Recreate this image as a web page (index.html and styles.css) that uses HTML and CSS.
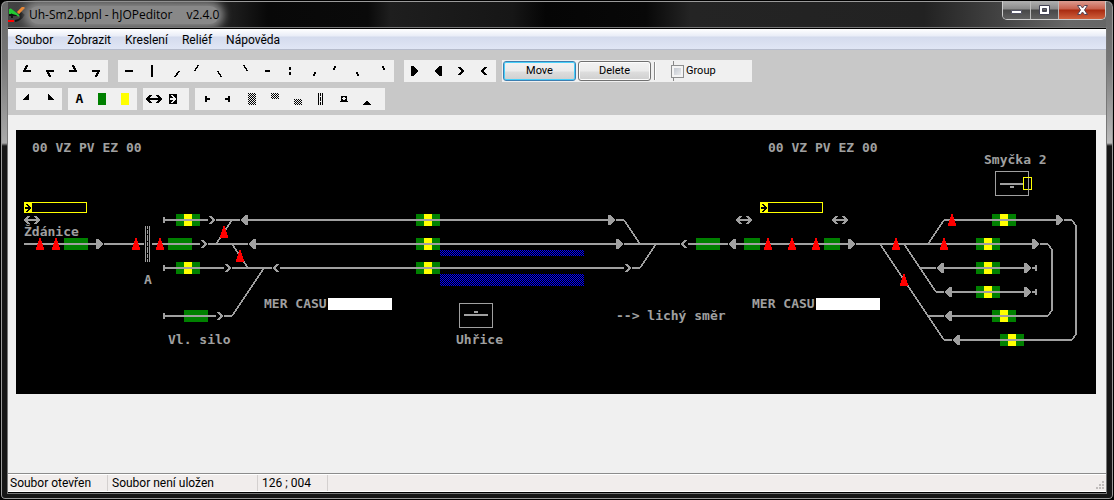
FILE: index.html
```html
<!DOCTYPE html>
<html lang="cs">
<head>
<meta charset="utf-8">
<title>Uh-Sm2.bpnl - hJOPeditor v2.4.0</title>
<link rel="stylesheet" href="styles.css">
</head>
<body>
<svg class="defs" width="0" height="0" aria-hidden="true">
  <defs>
    <pattern id="checker" width="2" height="2" patternUnits="userSpaceOnUse">
      <path d="M0 0h1v1h-1zM1 1h1v1h-1z" fill="#000"/>
    </pattern>
    <pattern id="checker-blue" width="2" height="2" patternUnits="userSpaceOnUse">
      <path d="M0 0h1v1h-1zM1 1h1v1h-1z" fill="#0000ff"/>
    </pattern>
    <!-- Every symbol sits in an 8 x 12 cell -->
    <path id="tri-r" d="M0 1h3v1h1v1h1v1h1v1h1v2h-1v1h-1v1h-1v1h-1v1h-3z"/>
    <path id="tri-l" d="M8 1h-3v1h-1v1h-1v1h-1v1h-1v2h1v1h1v1h1v1h1v1h3z"/>
    <path id="chev-r" d="M1 2h3v1h1v1h1v1h1v2h-1v1h-1v1h-1v1h-3v-1h1v-1h1v-1h1v-2h-1v-1h-1v-1h-1z"/>
    <path id="chev-l" d="M7 2h-3v1h-1v1h-1v1h-1v2h1v1h1v1h1v1h3v-1h-1v-1h-1v-1h-1v-2h1v-1h1v-1h1z"/>
    <path id="signal" d="M-1 0h2v3h1v3h1v3h1v3h-8v-3h1v-3h1v-3h1z"/>
    <path id="bidir" d="M0 5h1v-1h1v-1h1v-1h3v1h-1v1h-1v1h8v-1h-1v-1h-1v-1h3v1h1v1h1v1h1v2h-1v1h-1v1h-1v1h-3v-1h1v-1h1v-1h-8v1h1v1h1v1h-3v-1h-1v-1h-1v-1h-1z"/>
    <path id="arrow" d="M1 5h3v-1h-1v-1h-1v-1h2v1h1v1h1v1h1v2h-1v1h-1v1h-1v1h-2v-1h1v-1h1v-1h-3z"/>
    <path id="buffer-l" d="M3 3h2v2h3v2h-3v2h-2z"/>
    <path id="buffer-r" d="M5 3h-2v2h-3v2h3v2h2z"/>
    <path id="crossing" d="M1 0h1v12h-1zM5 0h1v12h-1zM3 0h1v3h-1zM3 4h1v4h-1zM3 9h1v3h-1z"/>
    <g id="block3"><path class="green" d="M0 0h24v12h-24z"/></g>
    <g id="block3y"><path class="green" d="M0 0h24v12h-24z"/><path class="yellow" d="M8 0h8v12h-8z"/></g>
    <g id="direction">
      <path class="yellow" d="M0 0h8v11h-8z"/>
      <path d="M.5 .5h62v10h-62z" fill="none" stroke="#ff0"/>
      <use href="#arrow" fill="#000"/>
    </g>
  </defs>
</svg>

<div class="window">
  <header class="titlebar">
    <svg class="app-icon" width="17" height="17" viewBox="0 0 17 17" aria-hidden="true">
      <path d="M1 8h12M4 5v6" stroke="#111" stroke-width="2" fill="none"/>
      <path d="M12 4l5 4-5 4z" fill="#111"/>
      <path d="M2 2l9 7M2 2v5M2 5l6 2" stroke="#2c3" stroke-width="2" fill="none"/>
      <path d="M10 6l6-6" stroke="#f82" stroke-width="3" fill="none"/>
      <path d="M7 14q5-1 8-5" stroke="#111" stroke-width="2" fill="none"/>
      <path d="M0 14h6" stroke="#f00" stroke-width="2"/>
    </svg>
    <h1 class="title"><span>Uh-Sm2.bpnl - hJOPeditor</span><span>v2.4.0</span></h1>
    <div class="caption-buttons">
      <button class="caption" type="button" aria-label="Minimalizovat">
        <svg width="13" height="10" viewBox="0 0 13 10"><path d="M1.500 5.500h10v3h-10z" fill="#fff" stroke="#556"/></svg>
      </button>
      <button class="caption" type="button" aria-label="Maximalizovat">
        <svg width="13" height="10" viewBox="0 0 13 10"><path d="M1.500 .5h10v9h-10zM4.500 3.500v3h4v-3z" fill="#fff" fill-rule="evenodd" stroke="#445"/></svg>
      </button>
      <button class="caption close" type="button" aria-label="Zavřít">
        <svg width="13" height="10" viewBox="0 0 13 10"><path d="M1.500 .5h3l2 2.500 2-2.500h3l-3 4.500 3 4.500h-3l-2-2.500-2 2.500h-3l3-4.500z" fill="#fff" stroke="#545"/></svg>
      </button>
    </div>
  </header>

  <main class="client">
    <nav class="menu">
      <button type="button">Soubor</button>
      <button type="button">Zobrazit</button>
      <button type="button">Kreslení</button>
      <button type="button">Reliéf</button>
      <button type="button">Nápověda</button>
    </nav>

    <div class="toolbars">
      <div class="tool-row">
        <div class="group wide-gap">
          <button class="tool" type="button" aria-label="Oblouk 1"><svg viewBox="-7 -5 23 22"><path class="ln" d="M4.500 0L1 6h7"/></svg></button>
          <button class="tool" type="button" aria-label="Oblouk 2"><svg viewBox="-7 -5 23 22"><path class="ln" d="M8 6H1l3.500 6"/></svg></button>
          <button class="tool" type="button" aria-label="Oblouk 3"><svg viewBox="-7 -5 23 22"><path class="ln" d="M3.500 0L7 6H0"/></svg></button>
          <button class="tool" type="button" aria-label="Oblouk 4"><svg viewBox="-7 -5 23 22"><path class="ln" d="M0 6h7l-3.500 6"/></svg></button>
        </div>
        <div class="group wide-gap">
          <button class="tool" type="button" aria-label="Vodorovná"><svg viewBox="-7 -5 23 22"><path class="ln" d="M0 6h8"/></svg></button>
          <button class="tool" type="button" aria-label="Svislá"><svg viewBox="-7 -5 23 22"><path class="ln" d="M4 0v12"/></svg></button>
          <button class="tool" type="button" aria-label="Šikmá 1"><svg viewBox="-7 -5 23 22"><path class="ln thin" d="M8 6l-4 6"/></svg></button>
          <button class="tool" type="button" aria-label="Šikmá 2"><svg viewBox="-7 -5 23 22"><path class="ln thin" d="M4.500 0l-4 6"/></svg></button>
          <button class="tool" type="button" aria-label="Šikmá 3"><svg viewBox="-7 -5 23 22"><path class="ln thin" d="M.5 6l4 6"/></svg></button>
          <button class="tool" type="button" aria-label="Šikmá 4"><svg viewBox="-7 -5 23 22"><path class="ln thin" d="M3.500 0l4 6"/></svg></button>
          <button class="tool" type="button" aria-label="Krátká vodorovná"><svg viewBox="-7 -5 23 22"><path class="ln" d="M2 6h5"/></svg></button>
          <button class="tool" type="button" aria-label="Krátká svislá"><svg viewBox="-7 -5 23 22"><path class="ln" d="M4 2v3M4 7v3"/></svg></button>
          <button class="tool" type="button" aria-label="Krátká šikmá 1"><svg viewBox="-7 -5 23 22"><path d="M5 7h2v2h-1v2h-2v-2h1z"/></svg></button>
          <button class="tool" type="button" aria-label="Krátká šikmá 2"><svg viewBox="-7 -5 23 22"><path d="M2 1h2v2h-1v2h-2v-2h1z"/></svg></button>
          <button class="tool" type="button" aria-label="Krátká šikmá 3"><svg viewBox="-7 -5 23 22"><path d="M1 7h2v2h1v2h-2v-2h-1z"/></svg></button>
          <button class="tool" type="button" aria-label="Krátká šikmá 4"><svg viewBox="-7 -5 23 22"><path d="M4 1h2v2h1v2h-2v-2h-1z"/></svg></button>
        </div>
        <div class="group">
          <button class="tool" type="button" aria-label="Návěstidlo vpravo"><svg viewBox="-7 -5 23 22"><use href="#tri-r"/></svg></button>
          <button class="tool" type="button" aria-label="Návěstidlo vlevo"><svg viewBox="-7 -5 23 22"><use href="#tri-l"/></svg></button>
          <button class="tool" type="button" aria-label="Seřaďovací vpravo"><svg viewBox="-7 -5 23 22"><use href="#chev-r"/></svg></button>
          <button class="tool" type="button" aria-label="Seřaďovací vlevo"><svg viewBox="-7 -5 23 22"><use href="#chev-l"/></svg></button>
        </div>
        <div class="group actions">
          <button class="push focused" type="button">Move</button>
          <button class="push" type="button">Delete</button>
          <span class="divider"></span>
          <label class="check"><input type="checkbox">Group</label>
        </div>
      </div>
      <div class="tool-row">
        <div class="group">
          <button class="tool" type="button" aria-label="Výkolejka 1"><svg viewBox="-7 -5 23 22"><path d="M6 7h-6v-1h1v-1h1v-1h1v-1h1v-1h1v-1h1z"/></svg></button>
          <button class="tool" type="button" aria-label="Výkolejka 2"><svg viewBox="-7 -5 23 22"><path d="M2 7h6v-1h-1v-1h-1v-1h-1v-1h-1v-1h-1v-1h-1z"/></svg></button>
        </div>
        <div class="group">
          <button class="tool letter" type="button">A</button>
          <button class="tool" type="button" aria-label="Zelený blok"><svg viewBox="-7 -5 23 22"><path class="green" d="M0 0h8v12h-8z"/></svg></button>
          <button class="tool" type="button" aria-label="Žlutý blok"><svg viewBox="-7 -5 23 22"><path class="yellow" d="M0 0h8v12h-8z"/></svg></button>
        </div>
        <div class="group">
          <button class="tool" type="button" aria-label="Úvazka"><svg viewBox="-3 -5 23 22"><use href="#bidir"/></svg></button>
          <button class="tool" type="button" aria-label="Úvazka soupravy"><svg viewBox="-3 -5 23 22"><path d="M0 1h8v10h-8z"/><use href="#arrow" fill="#f0f0f0"/></svg></button>
        </div>
        <div class="group padded">
          <button class="tool" type="button" aria-label="Zarážedlo vlevo"><svg viewBox="-7 -5 23 22"><use href="#buffer-l"/></svg></button>
          <button class="tool" type="button" aria-label="Zarážedlo vpravo"><svg viewBox="-7 -5 23 22"><use href="#buffer-r"/></svg></button>
          <button class="tool" type="button" aria-label="Nástupiště"><svg viewBox="-7 -5 23 22"><path fill="url(#checker)" d="M0 0h8v12h-8z"/></svg></button>
          <button class="tool" type="button" aria-label="Nástupiště nahoře"><svg viewBox="-7 -5 23 22"><path fill="url(#checker)" d="M0 0h8v6h-8z"/></svg></button>
          <button class="tool" type="button" aria-label="Nástupiště dole"><svg viewBox="-7 -5 23 22"><path fill="url(#checker)" d="M0 6h8v6h-8z"/></svg></button>
          <button class="tool" type="button" aria-label="Přejezd"><svg viewBox="-7 -5 23 22"><use href="#crossing"/></svg></button>
          <button class="tool" type="button" aria-label="Zámek"><svg viewBox="-7 -5 23 22"><path fill-rule="evenodd" d="M1 3h6v5h1v1h-8v-1h1zM3 4v1h-1v1h1v1h2v-1h1v-1h-1v-1z"/></svg></button>
          <button class="tool" type="button" aria-label="Rozpojovač"><svg viewBox="-7 -5 23 22"><path d="M3 8h2v1h1v1h1v1h1v1h-8v-1h1v-1h1v-1h1z"/></svg></button>
        </div>
      </div>
    </div>

    <div class="workspace">
      <svg class="relief" width="1080" height="264" viewBox="0 0 1080 264" role="img" aria-label="Reliéf kolejiště">
        <!-- platforms -->
        <path fill="url(#checker-blue)" d="M424 120h144v6h-144zM424 144h144v12h-144z"/>

        <!-- occupancy blocks -->
        <use href="#block3y" x="160" y="84"/><use href="#block3y" x="400" y="84"/><use href="#block3y" x="976" y="84"/>
        <use href="#block3" x="48" y="108"/><use href="#block3" x="152" y="108"/><use href="#block3y" x="400" y="108"/>
        <use href="#block3" x="680" y="108"/><path class="green" d="M728 108h16v12h-16zM808 108h16v12h-16z"/><use href="#block3y" x="960" y="108"/>
        <use href="#block3y" x="160" y="132"/><use href="#block3y" x="400" y="132"/><use href="#block3y" x="960" y="132"/>
        <use href="#block3y" x="960" y="156"/>
        <use href="#block3" x="168" y="180"/><use href="#block3y" x="976" y="180"/>
        <use href="#block3y" x="984" y="204"/>

        <!-- straight tracks -->
        <path class="track" d="M148 90H192M200 90H224M232 90H592M600 90H608M928 90H1040M1048 90H1056
          M8 114H80M88 114H128M136 114H184M192 114H232M240 114H600M608 114H664M672 114H712M720 114H832M840 114H1016M1024 114H1032
          M148 138H208M216 138H256M264 138H608M616 138H624M904 138H920M928 138H1008
          M920 162H928M936 162H1008
          M148 186H200M208 186H216M912 186H928M936 186H1032
          M928 210H936M944 210H1056"/>
        <!-- diagonals and loops -->
        <path class="diag" d="M216 90L200 114M216 114L232 138M216 186L248 138M608 90L624 114M624 138L640 114
          M928 90L912 114M864 114L928 210M888 114L920 162
          M1056 90L1060 96V204L1056 210M1032 114L1036 120V180L1032 186"/>

        <g class="mark">
          <use href="#buffer-l" x="144" y="84"/><use href="#buffer-l" x="144" y="132"/><use href="#buffer-l" x="144" y="180"/>
          <use href="#buffer-r" x="1016" y="132"/><use href="#buffer-r" x="1016" y="156"/>
          <use href="#chev-r" x="192" y="84"/><use href="#tri-l" x="224" y="84"/><use href="#tri-r" x="592" y="84"/><use href="#tri-r" x="1040" y="84"/>
          <use href="#tri-r" x="80" y="108"/><use href="#chev-r" x="184" y="108"/><use href="#tri-l" x="232" y="108"/><use href="#tri-r" x="600" y="108"/>
          <use href="#chev-l" x="664" y="108"/><use href="#tri-l" x="712" y="108"/><use href="#tri-r" x="832" y="108"/><use href="#tri-r" x="1016" y="108"/>
          <use href="#chev-r" x="208" y="132"/><use href="#chev-l" x="256" y="132"/><use href="#chev-r" x="608" y="132"/>
          <use href="#tri-l" x="920" y="132"/><use href="#tri-r" x="1008" y="132"/>
          <use href="#tri-l" x="928" y="156"/><use href="#tri-r" x="1008" y="156"/>
          <use href="#chev-r" x="200" y="180"/><use href="#tri-l" x="928" y="180"/><use href="#tri-l" x="936" y="204"/>
          <use href="#bidir" x="8" y="84"/><use href="#bidir" x="720" y="84"/><use href="#bidir" x="816" y="84"/>
          <use href="#crossing" x="128" y="96"/><use href="#crossing" x="128" y="108"/><use href="#crossing" x="128" y="120"/>
        </g>

        <g class="red">
          <use href="#signal" x="936" y="84"/><use href="#signal" x="208" y="96"/>
          <use href="#signal" x="24" y="108"/><use href="#signal" x="40" y="108"/><use href="#signal" x="120" y="108"/><use href="#signal" x="144" y="108"/>
          <use href="#signal" x="752" y="108"/><use href="#signal" x="776" y="108"/><use href="#signal" x="800" y="108"/>
          <use href="#signal" x="880" y="108"/><use href="#signal" x="928" y="108"/>
          <use href="#signal" x="224" y="120"/><use href="#signal" x="888" y="144"/>
        </g>

        <g transform="translate(8 72)"><use href="#direction"/></g>
        <g transform="translate(744 72)"><use href="#direction"/></g>

        <!-- station buildings -->
        <path class="outline" d="M443.500 173.500h33v24h-33zM979.500 41.500h33v24h-33z"/>
        <path class="mark" d="M448 184h24v2h-24zM458 181h4v2h-4zM984 53h24v2h-24zM994 56h4v2h-4z"/>

        <path fill="#fff" d="M312 168h64v12h-64zM800 168h64v12h-64z"/>
        <path fill="#000" stroke="#ff0" d="M1007.500 47.500h8v12h-8z"/>
        <path class="mark" d="M1012 48h1v12h-1z"/>

        <g class="labels">
          <text x="16" y="22">00 VZ PV EZ 00</text>
          <text x="752" y="22">00 VZ PV EZ 00</text>
          <text x="968" y="34">Smyčka 2</text>
          <text x="8" y="106">Ždánice</text>
          <text x="128" y="154">A</text>
          <text x="248" y="178">MER CASU</text>
          <text x="736" y="178">MER CASU</text>
          <text x="600" y="190">--&gt; lichý směr</text>
          <text x="152" y="214">Vl. silo</text>
          <text x="440" y="214">Uhřice</text>
        </g>
      </svg>
    </div>

    <footer class="status">
      <span class="pane state">Soubor otevřen</span>
      <span class="pane saved">Soubor není uložen</span>
      <span class="pane coords">126 ; 004</span>
      <svg class="grip" width="10" height="10" viewBox="0 0 10 10" aria-hidden="true">
        <path d="M7 0h2v2h-2zM4 3h2v2h-2zM7 3h2v2h-2zM1 6h2v2h-2zM4 6h2v2h-2zM7 6h2v2h-2z" fill="#c0bcbb"/>
      </svg>
    </footer>
  </main>
</div>
</body>
</html>
```

FILE: styles.css
```css
* { box-sizing: border-box; }

body {
  margin: 0;
  background: #000;
  font: 12px/16px Roboto, "Noto Sans", sans-serif;
  color: #000;
}

button { font: inherit; color: inherit; }

.defs { position: absolute; }

.window {
  display: flex;
  flex-direction: column;
  min-height: 100vh;
  padding: 0 7px 6px;
  border: 1px solid #000;
  border-radius: 7px 7px 5px 5px;
  box-shadow: inset 0 0 0 1px #9a9a9a;
  background:
    linear-gradient(#666, #777 60px, #aaa 142px, #161616 145px, #161616) left / 7px 100% no-repeat,
    linear-gradient(#666, #777 60px, #bbb 142px, #161616 145px, #161616) right / 7px 100% no-repeat,
    linear-gradient(90deg, #444 0, #1c1c1c 21%, #080808 24%, #0a0a0a 33%, #1e1e1e 35%, #161616 46%, #050505 49%, #080808 58%, #242424 62%, #222 83%, #444 90%, #686868 96%, #666) top / 100% 29px no-repeat,
    #161616;
}

.titlebar {
  display: flex;
  align-items: flex-start;
  height: 27px;
}

.app-icon { margin-top: 6px; }

.title {
  display: flex;
  gap: 14px;
  margin: 5px 0 0 4px;
  font: 400 12px/18px "Open Sans", "Noto Sans", sans-serif;
  background: #888;
  border-radius: 9px;
  box-shadow: 0 0 8px 5px #888;
}

.caption-buttons {
  display: flex;
  margin-left: auto;
  border: 1px solid #ccc;
  border-top: 0;
  border-radius: 0 0 5px 5px;
  overflow: hidden;
}

.caption {
  display: flex;
  align-items: center;
  justify-content: center;
  width: 28px;
  height: 18px;
  padding: 0;
  border: 0;
  border-right: 1px solid #bbb;
  background: linear-gradient(#b0b0b0, #8a8a8a 8px, #484848 9px, #606060);
}

.caption.close {
  width: 46px;
  border-right: 0;
  background: linear-gradient(#dc9c90, #c8604c 8px, #a82a10 9px, #d0603c);
}

.client {
  display: flex;
  flex: 1;
  flex-direction: column;
  min-width: 0;
  border: 1px solid #000;
  border-width: 1px 0;
  outline: 1px solid #777;
  background: #f0f0f0;
}

.menu {
  display: flex;
  height: 21px;
  border-bottom: 1px solid #b6bccc;
  background: linear-gradient(#fff, #e9edf7 7px, #d4dbed 8px, #e0e6f5);
}

.menu button {
  padding: 2px 7px 0;
  border: 0;
  background: none;
}

.toolbars {
  display: flex;
  flex-direction: column;
  gap: 6px;
  padding: 10px 8px 5px;
  background: #c8c8c8;
}

.tool-row { display: flex; gap: 6px; }

.group {
  display: flex;
  align-items: center;
  height: 22px;
  background: #f0f0f0;
}

.wide-gap { margin-right: 4px; }
.padded { padding-right: 6px; }

.tool {
  width: 23px;
  height: 22px;
  padding: 0;
  border: 0;
  background: none;
}

.tool svg {
  display: block;
  width: 23px;
  height: 22px;
  shape-rendering: crispEdges;
}

.tool.letter { font: bold 13px/22px "DejaVu Sans Mono", monospace; }

.ln { fill: none; stroke: #000; stroke-width: 2px; }
.ln.thin { stroke-width: 1.6px; }
.green { fill: #008000; }
.yellow { fill: #ffff00; }

.actions {
  gap: 2px;
  width: 250px;
  padding-left: 1px;
  font-size: 11px;
}

.push {
  width: 73px;
  height: 20px;
  padding: 0;
  border: 1px solid #707070;
  border-radius: 3px;
  box-shadow: inset 0 0 0 1px #fcfcfc;
  background: linear-gradient(#f2f2f2, #ebebeb 9px, #dddddd 10px, #cfcfcf);
}

.push.focused {
  border-color: #3c7fb1;
  box-shadow: inset 0 0 0 1px #48d0fa;
}

.divider {
  width: 2px;
  height: 18px;
  margin-left: 1px;
  border-left: 1px solid #888;
  border-right: 1px solid #fff;
}

.check {
  display: flex;
  align-items: center;
  gap: 2px;
  height: 20px;
  margin-left: 13px;
  background: linear-gradient(#888, #888) 2px 0 / 1px 20px no-repeat;
}

.check input {
  appearance: none;
  width: 13px;
  height: 13px;
  margin: 0;
  border: 1px solid #8e8f8f;
  box-shadow: inset 0 0 0 2px #f4f4f4;
  background: linear-gradient(135deg, #b8bec8, #f4f4f4);
}

.workspace {
  flex: 1;
  padding: 15px 8px;
  overflow: auto;
}

.relief {
  display: block;
  background: #000;
  shape-rendering: crispEdges;
}

.track { fill: none; stroke: #a0a0a0; stroke-width: 2px; }
.diag { fill: none; stroke: #a0a0a0; stroke-width: 1.6px; }
.mark { fill: #a0a0a0; }
.red { fill: #ff0000; }
.outline { fill: none; stroke: #a0a0a0; }

.labels {
  fill: #a0a0a0;
  font: bold 13px "DejaVu Sans Mono", monospace;
  white-space: pre;
}

.status {
  display: flex;
  align-items: center;
  height: 19px;
  border-top: 1px solid #8c8c8c;
  border-bottom: 1px solid #fff;
  box-shadow: inset 0 1px #fff;
  background: #f1edec;
}

.pane {
  padding: 0 4px 0 2px;
  border-right: 1px solid #d4d0cf;
}

.pane + .pane { padding-left: 4px; }
.state { width: 100px; }
.saved { width: 150px; }
.coords { width: 70px; }

.grip { margin: 6px 1px 0 auto; }
```
